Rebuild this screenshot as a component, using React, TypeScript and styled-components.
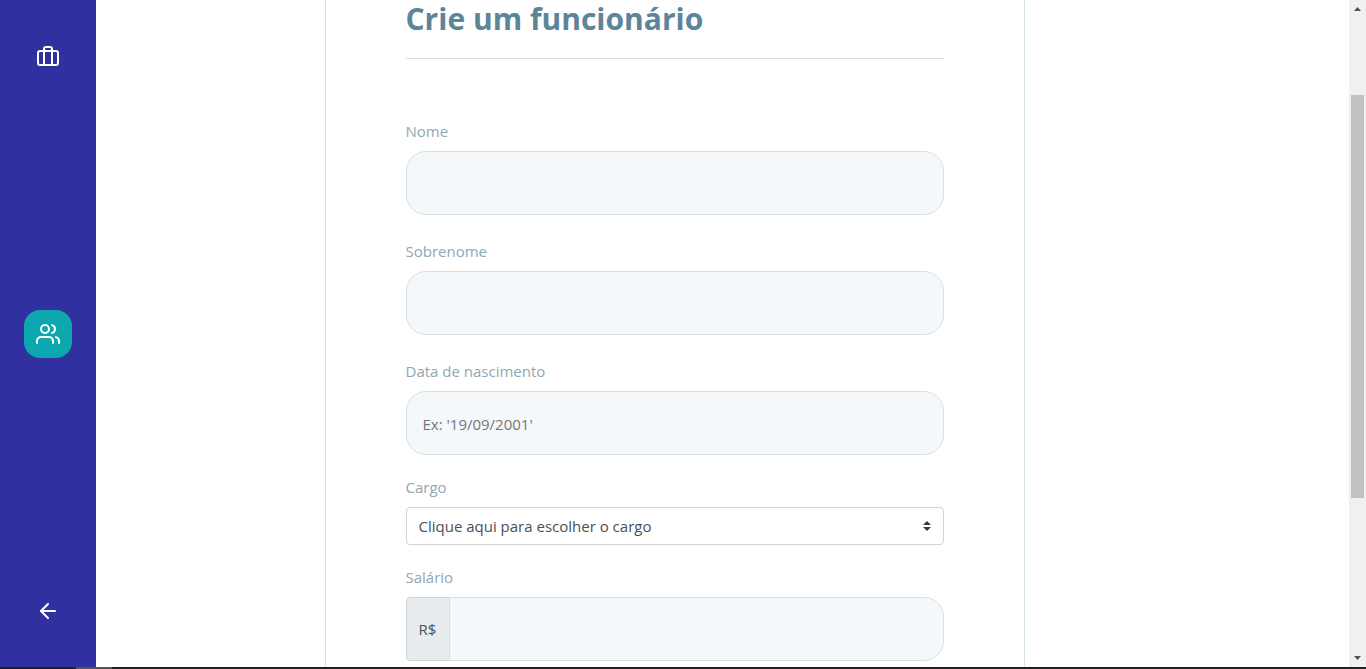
import React from 'react';
import styled, { createGlobalStyle } from 'styled-components';
import { FiArrowLeft, FiBriefcase, FiUsers } from 'react-icons/fi';

const GlobalStyle = createGlobalStyle`
  * { box-sizing: border-box; margin: 0; padding: 0; }
  body { background: #fff; }
  body, input, button, select {
    font-family: 'Segoe UI', 'Open Sans', 'Noto Sans', sans-serif;
    font-size: 15px;
    line-height: 24px;
  }
`;

const Screen = styled.div`
  display: flex;
  flex-direction: column;
  height: 100vh;
  overflow: hidden;
`;

const Page = styled.div`
  flex: 1;
  min-height: 0;
  display: flex;
`;

const Sidebar = styled.aside`
  width: 96px;
  flex-shrink: 0;
  padding: 32px 24px;
  background: #3030a0;
  display: flex;
  flex-direction: column;
  justify-content: space-between;
  align-items: center;
`;

const NavButton = styled.button<{ $active?: boolean }>`
  width: 48px;
  height: 48px;
  border: 0;
  border-radius: 16px;
  background: ${({ $active }) => ($active ? '#0ca7ae' : 'transparent')};
  color: #fff;
  display: flex;
  align-items: center;
  justify-content: center;
  cursor: pointer;
`;

const Main = styled.main`
  flex: 1;
  min-width: 0;
  padding-right: 96px;
  overflow: hidden;
`;

const Form = styled.form`
  width: 100%;
  max-width: 700px;
  min-height: 100%;
  margin: 0 auto;
  padding: 0 80px 64px;
  border: 1px solid #d3e2e5;
  border-width: 0 1px;
`;

const Title = styled.h1`
  padding-bottom: 20px;
  margin-bottom: 60px;
  border-bottom: 1px solid #d3e2e5;
  color: #5c8599;
  font-size: 30px;
  line-height: 38px;
  font-weight: 700;
`;

const Field = styled.div<{ $gap?: number }>`
  margin-bottom: ${({ $gap = 20 }) => $gap}px;
`;

const Label = styled.label`
  display: block;
  margin-bottom: 8px;
  color: #8fa7b3;
`;

const Input = styled.input<{ $grouped?: boolean }>`
  display: block;
  flex: 1;
  width: 100%;
  min-width: 0;
  height: 64px;
  padding: 2px 16px 0;
  border: 1px solid #d3e2e5;
  border-radius: ${({ $grouped }) => ($grouped ? '0 20px 20px 0' : '20px')};
  margin-left: ${({ $grouped }) => ($grouped ? '-1px' : '0')};
  background: #f5f8fa;
  color: #5c8599;
  outline: none;
  &::placeholder { color: #757575; opacity: 1; }
`;

const SelectBox = styled.div`
  position: relative;
`;

const Select = styled.select`
  appearance: none;
  display: block;
  width: 100%;
  height: 38px;
  padding: 6px 28px 6px 12px;
  border: 1px solid #ced4da;
  border-radius: 4px;
  background: #fff;
  color: #495057;
`;

const Arrows = styled.svg`
  position: absolute;
  top: 14px;
  right: 13px;
  pointer-events: none;
`;

const InputGroup = styled.div`
  display: flex;
`;

const Prefix = styled.span`
  display: flex;
  align-items: center;
  min-width: 44px;
  padding: 0 12px;
  border: 1px solid #ced4da;
  border-radius: 4px 0 0 4px;
  background: #e9ecef;
  color: #495057;
`;

const Scrollbar = styled.div`
  width: 17px;
  flex-shrink: 0;
  background: #f0f0f0;
  display: flex;
  flex-direction: column;
`;

const ScrollArrow = styled.svg`
  width: 17px;
  height: 17px;
  flex-shrink: 0;
  fill: #505050;
`;

const Track = styled.div`
  flex: 1;
  display: grid;
  grid-template-rows: 78fr 403fr 152fr;
`;

const Thumb = styled.div`
  grid-row: 2;
  margin: 0 2px;
  background: #c1c1c1;
`;

const Taskbar = styled.div`
  height: 2px;
  flex-shrink: 0;
  padding-left: 76px;
  background: #231f20;
`;

const TaskbarItem = styled.div`
  width: 36px;
  height: 2px;
  background: #555;
`;

export default function App() {
  return (
    <Screen>
      <GlobalStyle />
      <Page>
        <Sidebar>
          <NavButton type="button" aria-label="Cargos">
            <FiBriefcase size={24} />
          </NavButton>
          <NavButton type="button" aria-label="Funcionários" $active>
            <FiUsers size={24} />
          </NavButton>
          <NavButton type="button" aria-label="Voltar">
            <FiArrowLeft size={24} />
          </NavButton>
        </Sidebar>
        <Main>
          <Form>
            <Title>Crie um funcionário</Title>
            <Field $gap={24}>
              <Label htmlFor="nome">Nome</Label>
              <Input id="nome" />
            </Field>
            <Field $gap={24}>
              <Label htmlFor="sobrenome">Sobrenome</Label>
              <Input id="sobrenome" />
            </Field>
            <Field>
              <Label htmlFor="nascimento">Data de nascimento</Label>
              <Input id="nascimento" placeholder="Ex: '19/09/2001'" />
            </Field>
            <Field>
              <Label htmlFor="cargo">Cargo</Label>
              <SelectBox>
                <Select id="cargo">
                  <option>Clique aqui para escolher o cargo</option>
                </Select>
                <Arrows width="8" height="10" viewBox="0 0 4 5" aria-hidden="true">
                  <path fill="#343a40" d="M2 0L0 2h4zm0 5L0 3h4z" />
                </Arrows>
              </SelectBox>
            </Field>
            <Field>
              <Label htmlFor="salario">Salário</Label>
              <InputGroup>
                <Prefix>R$</Prefix>
                <Input id="salario" $grouped />
              </InputGroup>
            </Field>
          </Form>
        </Main>
        <Scrollbar aria-hidden="true">
          <ScrollArrow viewBox="0 0 17 17">
            <path d="M5 11L8.5 7L12 11z" />
          </ScrollArrow>
          <Track>
            <Thumb />
          </Track>
          <ScrollArrow viewBox="0 0 17 17">
            <path d="M5 6L8.5 10L12 6z" />
          </ScrollArrow>
        </Scrollbar>
      </Page>
      <Taskbar>
        <TaskbarItem />
      </Taskbar>
    </Screen>
  );
}
